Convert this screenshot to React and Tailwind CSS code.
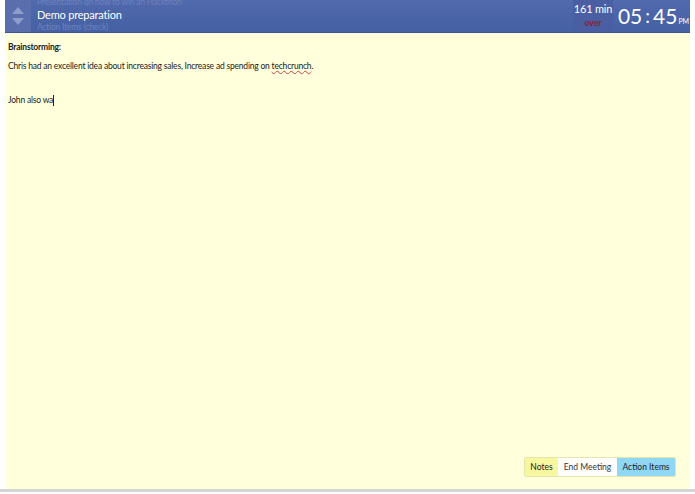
export default function App() {
  return (
    <div className="w-[695px] h-[494px] bg-white overflow-hidden" style={{ fontFamily: 'Lato, "Open Sans", sans-serif' }}>
      <div className="ml-[5px] w-[685px] h-[489px] flex flex-col bg-[#ffffdc]">
        <header className="h-[33px] flex bg-gradient-to-b from-[#5169ad] to-[#4560a4] border-b border-[#3f5696]">
          <div className="w-[26px] flex flex-col items-center justify-center gap-[4px] bg-[#5a6eae]">
            <svg width="12" height="7" viewBox="0 0 12 7"><path d="M0 7 L6 0 L12 7 Z" fill="#8d9dcb" /></svg>
            <svg width="12" height="7" viewBox="0 0 12 7"><path d="M0 0 L6 7 L12 0 Z" fill="#8d9dcb" /></svg>
          </div>
          <div className="flex-1 pl-[6px] flex flex-col leading-none overflow-hidden tracking-[-0.2px]">
            <div className="text-[8.5px] text-[#6e82bd] -mt-[2px] h-[10px]">Presentation on how to win an Hackthon</div>
            <div className="text-[11px] text-white h-[13px] mt-[1px]">Demo preparation</div>
            <div className="text-[8.5px] text-[#6e82bd] mt-[1px]">Action Items (check)</div>
          </div>
          <div className="w-[40px] flex flex-col items-center bg-[#4a5fa3] pt-[3px] leading-none">
            <div className="text-[11px] text-white whitespace-nowrap tracking-[-0.2px]">161 min</div>
            <div className="text-[8.5px] text-[#8c1d35] mt-[5px] font-bold">over</div>
          </div>
          <div className="w-[77px] flex items-end justify-center pb-[6px] pl-[4px] leading-none text-white whitespace-nowrap">
            <span className="text-[21px]">05</span>
            <span className="text-[19px] mx-[3px] mb-[1px]">:</span>
            <span className="text-[21px]">45</span>
            <span className="text-[7px] mb-[1px] ml-[1px]">PM</span>
          </div>
        </header>
        <div className="flex-1 flex flex-col px-[3px] pt-[10px] text-[8.5px] tracking-[-0.2px] text-[#222] leading-none">
          <div className="font-bold">Brainstorming:</div>
          <div className="mt-[10px]">
            Chris had an excellent idea about increasing sales, Increase ad spending on{' '}
            <span className="underline decoration-wavy decoration-[#d04040] decoration-[1px]">techcrunch</span>.
          </div>
          <div className="mt-[25px] flex items-center">
            John also wa<span className="inline-block w-px h-[11px] bg-[#222]"></span>
          </div>
          <div className="flex-1"></div>
          <div className="flex justify-end pr-[11px] pb-[12px]">
            <div className="flex text-[8.5px] tracking-normal text-[#222] border border-[#e5e5b0] rounded-[2px] overflow-hidden h-[20px]">
              <div className="w-[33px] flex items-center justify-center bg-[#f7f79f]">Notes</div>
              <div className="w-[59px] flex items-center justify-center bg-white text-[#333]">End Meeting</div>
              <div className="w-[58px] flex items-center justify-center bg-[#8fd7f2]">Action Items</div>
            </div>
          </div>
        </div>
      </div>
      <div className="h-[3px] bg-[#d4d4d4]"></div>
    </div>
  );
}
